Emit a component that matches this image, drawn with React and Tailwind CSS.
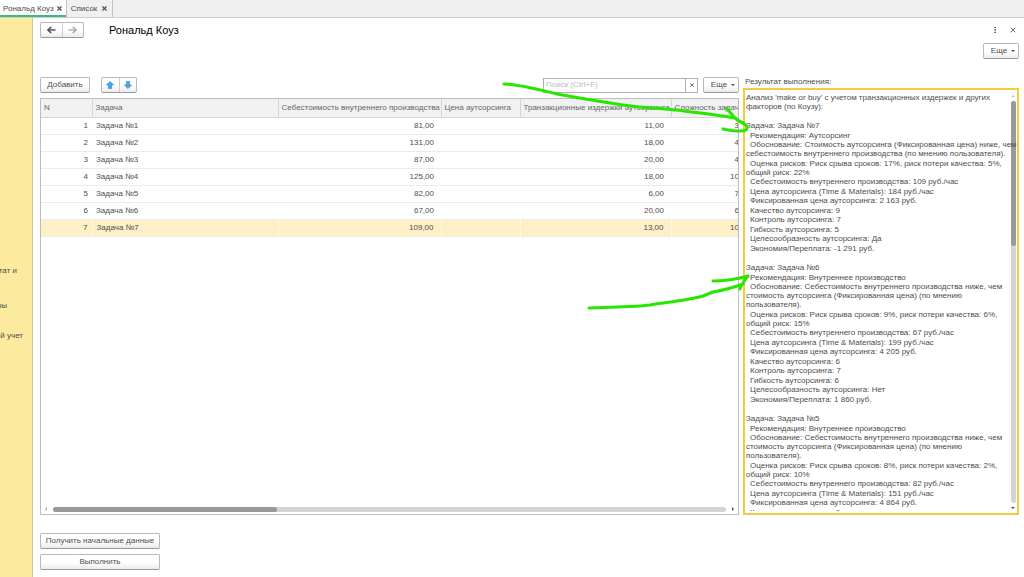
import React from 'react';
import { MoreVertical, X } from 'lucide-react';

const columns = [
  { title: 'N', width: 'w-[51px]' },
  { title: 'Задача', width: 'w-[186px]' },
  { title: 'Себестоимость внутреннего производства', width: 'w-[163px]' },
  { title: 'Цена аутсорсинга', width: 'w-[79px]' },
  { title: 'Транзакционные издержки аутсорсинга', width: 'w-[151px]' },
  { title: 'Сложность задачи', width: 'w-[86px]' },
];

const rows = [
  { n: 1, task: 'Задача №1', cost: '81,00', transaction: '11,00', complexity: '3,00' },
  { n: 2, task: 'Задача №2', cost: '131,00', transaction: '18,00', complexity: '4,00' },
  { n: 3, task: 'Задача №3', cost: '87,00', transaction: '20,00', complexity: '4,00' },
  { n: 4, task: 'Задача №4', cost: '125,00', transaction: '18,00', complexity: '10,00' },
  { n: 5, task: 'Задача №5', cost: '82,00', transaction: '6,00', complexity: '7,00' },
  { n: 6, task: 'Задача №6', cost: '67,00', transaction: '20,00', complexity: '6,00' },
  { n: 7, task: 'Задача №7', cost: '109,00', transaction: '13,00', complexity: '10,00', selected: true },
];

const report = [
  {
    title: 'Задача: Задача №7',
    lines: [
      'Рекомендация: Аутсорсинг',
      'Обоснование: Стоимость аутсорсинга (Фиксированная цена) ниже, чем\nсебестоимость внутреннего производства (по мнению пользователя).',
      'Оценка рисков: Риск срыва сроков: 17%, риск потери качества: 5%,\nобщий риск: 22%',
      'Себестоимость внутреннего производства: 109 руб./час',
      'Цена аутсорсинга (Time & Materials): 184 руб./час',
      'Фиксированная цена аутсорсинга: 2 163 руб.',
      'Качество аутсорсинга: 9',
      'Контроль аутсорсинга: 7',
      'Гибкость аутсорсинга: 5',
      'Целесообразность аутсорсинга: Да',
      'Экономия/Переплата: -1 291 руб.',
    ],
  },
  {
    title: 'Задача: Задача №6',
    lines: [
      'Рекомендация: Внутреннее производство',
      'Обоснование: Себестоимость внутреннего производства ниже, чем\nстоимость аутсорсинга (Фиксированная цена) (по мнению\nпользователя).',
      'Оценка рисков: Риск срыва сроков: 9%, риск потери качества: 6%,\nобщий риск: 15%',
      'Себестоимость внутреннего производства: 67 руб./час',
      'Цена аутсорсинга (Time & Materials): 199 руб./час',
      'Фиксированная цена аутсорсинга: 4 205 руб.',
      'Качество аутсорсинга: 6',
      'Контроль аутсорсинга: 7',
      'Гибкость аутсорсинга: 6',
      'Целесообразность аутсорсинга: Нет',
      'Экономия/Переплата: 1 860 руб.',
    ],
  },
  {
    title: 'Задача: Задача №5',
    lines: [
      'Рекомендация: Внутреннее производство',
      'Обоснование: Себестоимость внутреннего производства ниже, чем\nстоимость аутсорсинга (Фиксированная цена) (по мнению\nпользователя).',
      'Оценка рисков: Риск срыва сроков: 8%, риск потери качества: 2%,\nобщий риск: 10%',
      'Себестоимость внутреннего производства: 82 руб./час',
      'Цена аутсорсинга (Time & Materials): 151 руб./час',
      'Фиксированная цена аутсорсинга: 4 864 руб.',
      'Качество аутсорсинга: 6',
    ],
  },
];

const buttonStyle =
  'h-4 rounded-xs border border-[#b9b9b9] border-b-[#999] bg-linear-to-b from-white from-50% to-[#ececec] flex items-center justify-center';

const Caret = () => <span className="border-x-2 border-t-2 border-x-transparent border-t-[#4d4d4d]" />;

const MoreButton = () => (
  <button className={`${buttonStyle} w-9 gap-1 pl-1`}>
    Еще
    <Caret />
  </button>
);

const Tab = ({ title, active }) => (
  <div
    className={`flex items-center border-r border-[#c4c4c4] ${
      active ? 'gap-0.5 bg-white px-[3px] shadow-[inset_0_-2px_0_#41b876]' : 'gap-1 px-1'
    }`}
  >
    <button>{title}</button>
    <button aria-label={`Закрыть ${title}`}>
      <X size={7} strokeWidth={4} />
    </button>
  </div>
);

const NavArrow = ({ forward }) => (
  <svg viewBox="0 0 9 8" className={`w-[9px] h-2 ${forward ? 'rotate-180' : ''}`}>
    <path d="M8.5 4H2" stroke="currentColor" strokeWidth="1.4" />
    <path d="M4.2 1 1 4l3.2 3" fill="none" stroke="currentColor" strokeWidth="1.6" />
  </svg>
);

const MoveIcon = ({ down }) => (
  <svg viewBox="0 0 8 8" className={`w-2 h-2 ${down ? 'rotate-180' : ''}`}>
    <path d="M4 .4 7.6 4H5.6V7.6H2.4V4H.4Z" fill="#45a5e4" stroke="#2b87c8" strokeWidth=".6" strokeLinejoin="round" />
  </svg>
);

const TaskTable = () => (
  <div className="flex-1 min-h-0 flex flex-col border border-[#bdbdbd] bg-white overflow-hidden">
    <div className="flex-1 min-h-0 overflow-hidden">
      <table className="table-fixed w-[716px] min-w-full border-collapse">
        <thead>
          <tr className="h-[18px] bg-[#f1f1f1] text-[#666]">
            {columns.map((col) => (
              <th
                key={col.title}
                className={`${col.width} pl-[3px] text-left font-normal whitespace-nowrap border-r border-b border-[#d6d6d6]`}
              >
                {col.title}
              </th>
            ))}
          </tr>
        </thead>
        <tbody>
          {rows.map((row) => (
            <tr
              key={row.n}
              className={`h-[17px] border-b border-[#ebebeb] ${
                row.selected ? 'bg-[#fdf0c6] divide-x divide-[#fff8e3]' : ''
              }`}
            >
              <td className="pr-1 text-right">{row.n}</td>
              <td className="pl-1">{row.task}</td>
              <td className="pr-[7px] text-right">{row.cost}</td>
              <td />
              <td className="pr-[7px] text-right">{row.transaction}</td>
              <td className="pr-[7px] text-right">{row.complexity}</td>
            </tr>
          ))}
        </tbody>
      </table>
    </div>
    <div className="h-2 mb-px flex items-center gap-1 px-1">
      <span className="border-y-2 border-r-2 border-y-transparent border-r-[#aaa]" />
      <div className="flex-1 h-[5px] mx-0.5 rounded-full bg-[#d4d4d4]">
        <div className="w-1/3 h-full rounded-full bg-[#999]" />
      </div>
      <span className="border-y-2 border-l-2 border-y-transparent border-l-[#4d4d4d]" />
    </div>
  </div>
);

const ResultBox = () => (
  <div className="flex-1 min-h-0 flex border-2 border-[#f5cb3c] bg-white pt-[3px] pl-px">
    <output
      id="result"
      tabIndex={0}
      className="z-10 flex-1 min-w-0 min-h-0 mb-0.5 overflow-x-visible overflow-y-clip whitespace-pre leading-[9px] outline-none"
    >
      <p className="pb-2.5">{"Анализ 'make or buy' с учетом транзакционных издержек и других\nфакторов (по Коузу):"}</p>
      {report.map((item) => (
        <div key={item.title} className="pb-2.5">
          <p>{item.title}</p>
          {item.lines.map((line) => (
            <p key={line} className="indent-1 even:mt-px">
              {line}
            </p>
          ))}
        </div>
      ))}
    </output>
    <div className="w-2 flex flex-col items-center gap-1 pt-0.5 pb-1">
      <span className="border-x-2 border-b-2 border-x-transparent border-b-[#c4c4c4]" />
      <div className="flex-1 w-[5px] rounded-full bg-[#d4d4d4]">
        <div className="h-[36%] w-full rounded-full bg-[#999]" />
      </div>
      <Caret />
    </div>
  </div>
);

/* Hand-drawn marks pointing from the task list to the report */
const Marks = () => (
  <svg
    viewBox="0 0 260 250"
    className="absolute z-20 top-0 -left-[244px] w-[260px] h-[250px] pointer-events-none"
    fill="none"
    stroke="#28e600"
    strokeWidth="3"
    strokeLinecap="round"
    strokeLinejoin="round"
  >
    <path d="M5 7C20 7 38 12 58 17C80 21 104 25 124 28C144 31 162 31 178 33C200 36 220 38 236 41L245 47M227 31C232 35 235 42 240 44C246 46 250 50 247 53C243 55 232 54 224 52" />
    <path d="M90 231C112 230 136 230 151 228C170 225 190 223 204 219L214 215C225 213 236 210 244 207M214 204C225 204 238 202 249 199C246 203 242 208 241 212" />
  </svg>
);

const App = () => (
  <div className="h-screen flex flex-col overflow-hidden bg-white font-['Liberation_Sans',Arial,sans-serif] text-[8px] leading-[10px] text-[#4d4d4d]">
    <nav className="h-[18px] shrink-0 flex bg-[#f0f0f0] border-b border-[#cfcfcf]">
      <Tab title="Рональд Коуз" active />
      <Tab title="Список" />
    </nav>

    <div className="flex-1 min-h-0 flex">
      <aside className="w-[33px] shrink-0 bg-[#fceb9e] border-r border-[#d0c694] overflow-hidden pt-[248px]">
        <div className="flex flex-col items-end whitespace-nowrap">
          <a href="#result" className="mr-[15px]">Результат и</a>
          <a href="#result" className="mr-[25px] mt-[25px]">Призывы</a>
          <a href="#result" className="mr-[9px] mt-5">Налоговый учет</a>
        </div>
      </aside>

      <main className="flex-1 min-w-0 flex flex-col pl-[7px] pr-[5px] pt-1 pb-[7px]">
        <header className="flex items-center">
          <div className={`${buttonStyle} w-11`}>
            <button aria-label="Назад" className="flex-1 h-full flex items-center justify-center border-r border-[#ccc]">
              <NavArrow />
            </button>
            <button aria-label="Вперед" className="flex-1 flex justify-center text-[#aaa]">
              <NavArrow forward />
            </button>
          </div>
          <h1 className="flex-1 ml-[25px] text-[11px] leading-4 text-black">Рональд Коуз</h1>
          <button aria-label="Меню" className="mr-2.5">
            <MoreVertical size={8} strokeWidth={3} />
          </button>
          <button aria-label="Закрыть" className="mr-0.5">
            <X size={8} strokeWidth={2.5} />
          </button>
        </header>
        <div className="flex justify-end pt-[5px]">
          <MoreButton />
        </div>

        <div className="flex-1 min-h-0 flex gap-1 pt-[18px]">
          <section className="flex-1 min-w-0 flex flex-col">
            <div className="flex items-center pb-[5px]">
              <button className={`${buttonStyle} w-[50px]`}>Добавить</button>
              <div className={`${buttonStyle} w-9 ml-[11px]`}>
                <button aria-label="Вверх" className="flex-1 h-full flex items-center justify-center border-r border-[#ccc]">
                  <MoveIcon />
                </button>
                <button aria-label="Вниз" className="flex-1 flex justify-center">
                  <MoveIcon down />
                </button>
              </div>
              <div className="ml-auto h-[15px] w-[155px] flex border border-[#b0b0b0] bg-white">
                <input
                  aria-label="Поиск"
                  placeholder="Поиск (Ctrl+F)"
                  className="flex-1 min-w-0 px-0.5 outline-none placeholder:text-[#bbb]"
                />
                <button aria-label="Очистить" className="w-3 flex items-center justify-center border-l border-[#b0b0b0]">
                  <X size={6} strokeWidth={3} />
                </button>
              </div>
              <div className="ml-[5px]">
                <MoreButton />
              </div>
            </div>
            <TaskTable />
          </section>

          <section className="relative w-[276px] shrink-0 flex flex-col">
            <label htmlFor="result" className="pl-0.5 pb-px">Результат выполнения:</label>
            <ResultBox />
            <Marks />
          </section>
        </div>

        <div className="w-[120px] flex flex-col gap-[5px] pt-[18px]">
          <button className={buttonStyle}>Получить начальные данные</button>
          <button className={buttonStyle}>Выполнить</button>
        </div>
      </main>
    </div>
  </div>
);

export default App;
